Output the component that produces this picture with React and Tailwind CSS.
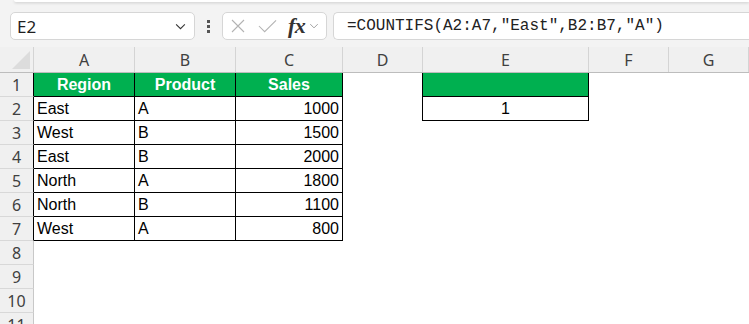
import React from 'react';

const COLS = [
    { key: 'A', w: 'w-[101px]' },
    { key: 'B', w: 'w-[101px]' },
    { key: 'C', w: 'w-[107px]' },
    { key: 'D', w: 'w-[80px]' },
    { key: 'E', w: 'w-[166px]' },
    { key: 'F', w: 'w-[80px]' },
    { key: 'G', w: 'flex-1' },
];

const DATA = [
    ['East', 'A', 1000],
    ['West', 'B', 1500],
    ['East', 'B', 2000],
    ['North', 'A', 1800],
    ['North', 'B', 1100],
    ['West', 'A', 800],
];

const Chevron = ({ className }) => (
    <svg viewBox="0 0 12 8" className={className} fill="none" stroke="currentColor" strokeWidth="1.2">
        <path d="M1 1.5 L6 6.5 L11 1.5" />
    </svg>
);

const FormulaBar = () => (
    <div className="relative h-[47px] bg-[#f3f3f3]">
        {/* ribbon edge */}
        <div className="absolute left-[14px] right-0 top-0 h-[2px] bg-white rounded-bl-[3px] shadow-[0_1px_3px_rgba(0,0,0,0.18)]" />
        <div className="flex items-start pl-[10px] pt-[12px]">
            <div className="w-[185px] h-[28px] bg-white border border-[#d6d6d6] rounded-[5px] flex items-center justify-between pl-[6px] pr-[8px]">
                <span className="text-[17px] text-[#1f1f1f] font-['Noto_Sans',sans-serif] leading-none">E2</span>
                <Chevron className="w-[11px] h-[7px] text-[#333]" />
            </div>
            <div className="w-[27px] h-[28px] flex flex-col items-center justify-center gap-[2px]">
                <span className="w-[3px] h-[3px] bg-[#555]" />
                <span className="w-[3px] h-[3px] bg-[#555]" />
                <span className="w-[3px] h-[3px] bg-[#555]" />
            </div>
            <div className="w-[105px] h-[28px] bg-white border border-[#d6d6d6] rounded-[5px] flex items-center pl-[8px]">
                <svg viewBox="0 0 14 14" className="w-[14px] h-[14px] text-[#b3b3b3]" fill="none" stroke="currentColor" strokeWidth="1.1">
                    <path d="M1 1 L13 13 M13 1 L1 13" />
                </svg>
                <svg viewBox="0 0 20 14" className="ml-[13px] w-[19px] h-[14px] text-[#b3b3b3]" fill="none" stroke="currentColor" strokeWidth="1.1">
                    <path d="M1 7 L7 13 L19 1" />
                </svg>
                <span className="ml-[11px] text-[22px] italic font-semibold text-[#333] font-['Liberation_Serif',serif] leading-none tracking-[-0.5px]">fx</span>
                <Chevron className="ml-[4px] w-[10px] h-[6px] text-[#999]" />
            </div>
            <div className="ml-[6px] flex-1 h-[28px] bg-white border border-r-0 border-[#d6d6d6] rounded-l-[5px] flex items-center pl-[13px]">
                <span className="text-[16px] text-[#222] font-['Liberation_Mono',monospace] leading-none">=COUNTIFS(A2:A7,"East",B2:B7,"A")</span>
            </div>
        </div>
    </div>
);

const ColumnHeaders = () => (
    <div className="flex h-[26px] bg-[#f0f0f0] border-b border-[#bdbdbd]">
        <div className="w-[34px] shrink-0 border-r border-[#d4d4d4] relative">
            <div className="absolute right-[3px] bottom-[3px] w-0 h-0 border-l-[18px] border-l-transparent border-b-[18px] border-b-[#dcdcdc]" />
        </div>
        {COLS.map(col => (
            <div key={col.key} className={`${col.w} shrink-0 border-r border-[#d4d4d4] flex items-center justify-center text-[16px] text-[#404040] font-['Noto_Sans',sans-serif]`}>
                {col.key}
            </div>
        ))}
    </div>
);

const Row = ({ n }) => {
    const inTable = n >= 1 && n <= 7;
    const record = n >= 2 && n <= 7 ? DATA[n - 2] : null;
    const cellBase = "shrink-0 h-full flex items-center px-[3px] text-[16px] font-['Liberation_Sans',sans-serif] text-black";
    const head = 'bg-[#00b050] justify-center font-bold text-white text-[15px]';
    const tbl = 'border-r border-b border-black';

    return (
        <div className="flex h-[24px]">
            <div className={`w-[34px] shrink-0 bg-[#f0f0f0] border-b border-b-[#d8d8d8] border-r ${inTable ? 'border-r-black' : 'border-r-[#c8c8c8]'} flex items-center justify-center text-[16px] text-[#404040] font-['Noto_Sans',sans-serif]`}>
                {n}
            </div>
            {n === 1 ? (
                <>
                    <div className={`w-[101px] ${cellBase} ${tbl} ${head}`}>Region</div>
                    <div className={`w-[101px] ${cellBase} ${tbl} ${head}`}>Product</div>
                    <div className={`w-[107px] ${cellBase} ${tbl} ${head}`}>Sales</div>
                </>
            ) : record ? (
                <>
                    <div className={`w-[101px] ${cellBase} ${tbl}`}>{record[0]}</div>
                    <div className={`w-[101px] ${cellBase} ${tbl}`}>{record[1]}</div>
                    <div className={`w-[107px] ${cellBase} ${tbl} justify-end`}>{record[2]}</div>
                </>
            ) : (
                <>
                    <div className={`w-[101px] ${cellBase}`} />
                    <div className={`w-[101px] ${cellBase}`} />
                    <div className={`w-[107px] ${cellBase}`} />
                </>
            )}
            <div className={`w-[80px] ${cellBase} ${n <= 2 ? 'border-r border-black' : ''}`} />
            {n === 1 ? (
                <div className={`w-[166px] ${cellBase} ${tbl} bg-[#00b050]`} />
            ) : n === 2 ? (
                <div className={`w-[166px] ${cellBase} ${tbl} justify-center`}>1</div>
            ) : (
                <div className={`w-[166px] ${cellBase}`} />
            )}
            <div className={`w-[80px] ${cellBase}`} />
            <div className="flex-1" />
        </div>
    );
};

const App = () => {
    const rows = Array.from({ length: 11 }, (_, i) => i + 1);
    return (
        <div className="w-[749px] h-[324px] overflow-hidden bg-white">
            <FormulaBar />
            <ColumnHeaders />
            {rows.map(n => <Row key={n} n={n} />)}
        </div>
    );
};

export default App;
